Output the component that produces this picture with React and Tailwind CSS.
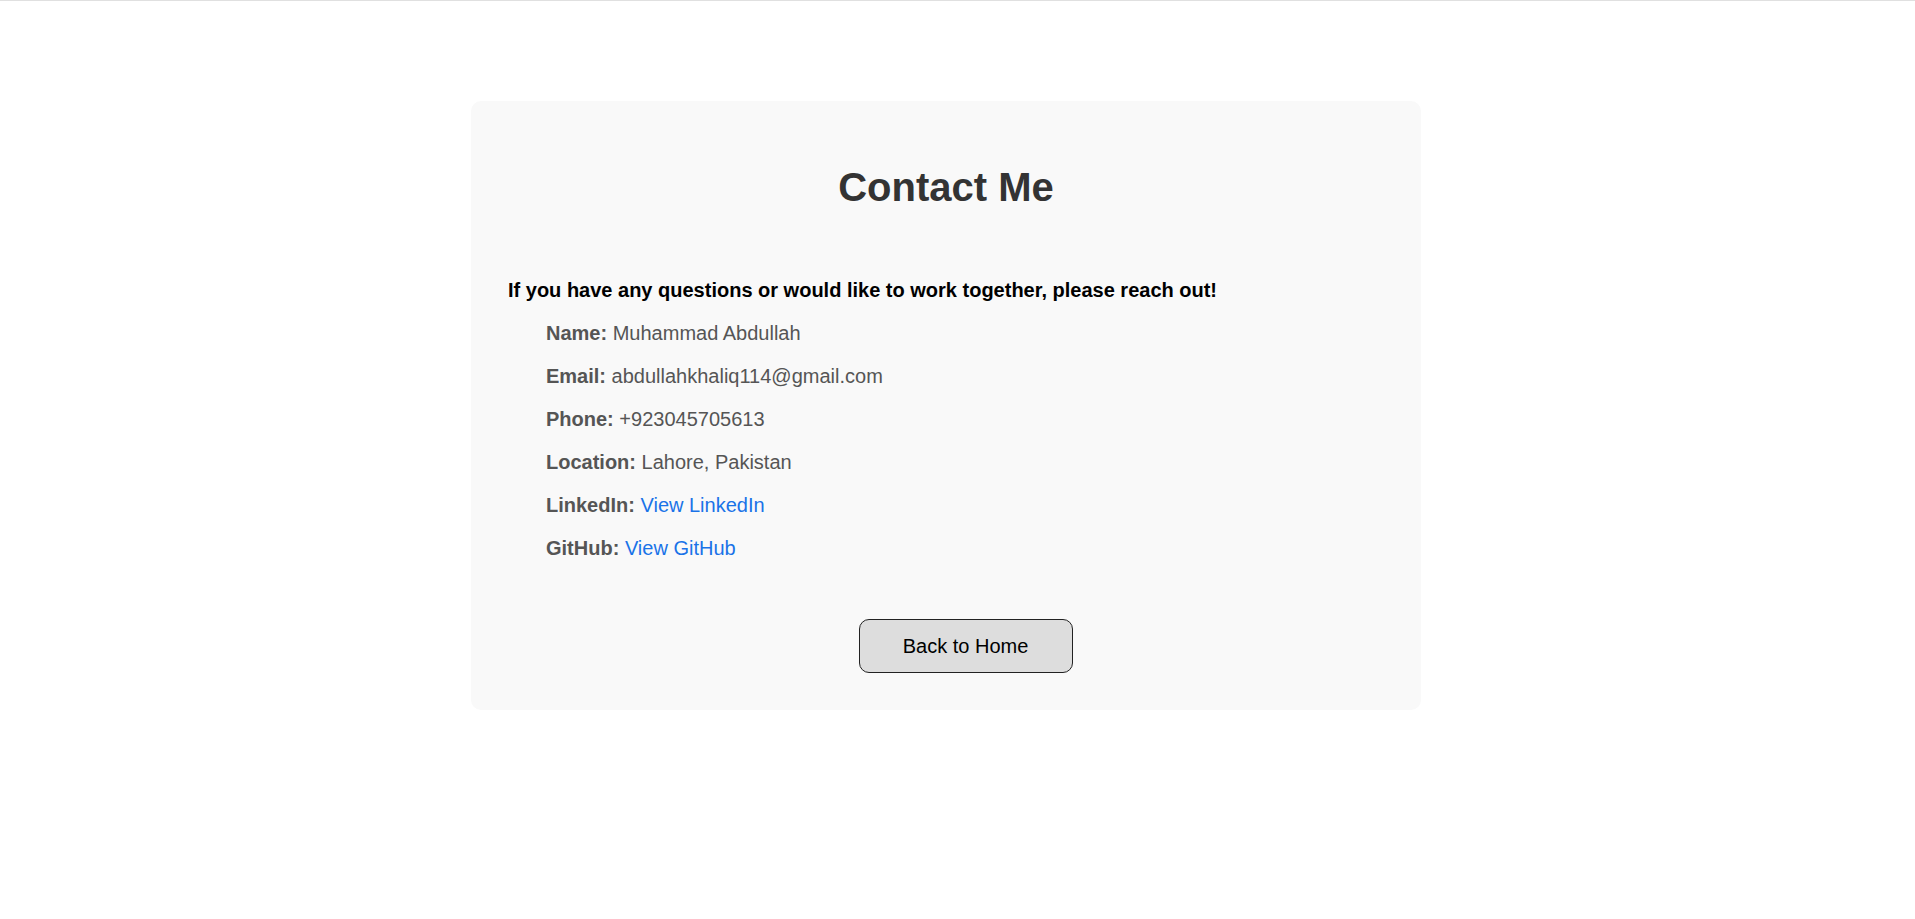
export default function App() {
  const items = [
    { label: "Name:", value: "Muhammad Abdullah" },
    { label: "Email:", value: "abdullahkhaliq114@gmail.com" },
    { label: "Phone:", value: "+923045705613" },
    { label: "Location:", value: "Lahore, Pakistan" },
    { label: "LinkedIn:", link: "View LinkedIn" },
    { label: "GitHub:", link: "View GitHub" },
  ];

  return (
    <div className="min-h-screen bg-white border-t border-[#e0e0e0] font-['Liberation_Sans',Arial,sans-serif]">
      <div className="pt-[100px] pr-[23px] flex justify-center">
        <div className="w-[950px] bg-[#f9f9f9] rounded-[10px] px-[37px] pt-[63px] pb-[37px]">
          <h1 className="text-center text-[40px] leading-[46px] font-bold text-[#333]">
            Contact Me
          </h1>

          <p className="mt-[69px] text-[20px] leading-[23px] font-bold text-black">
            If you have any questions or would like to work together, please
            reach out!
          </p>

          <ul className="mt-[20px] pl-[38px] flex flex-col gap-[20px] text-[20px] leading-[23px] text-[#555]">
            {items.map((it) => (
              <li key={it.label}>
                <strong className="font-bold">{it.label}</strong>{" "}
                {it.link ? (
                  <a href="#" className="text-[#1a73e8]">
                    {it.link}
                  </a>
                ) : (
                  it.value
                )}
              </li>
            ))}
          </ul>

          <div className="mt-[59px] flex justify-center">
            <button className="ml-[39px] w-[214px] h-[54px] border border-[#222] rounded-[10px] bg-[#dddddd] text-[20px] text-black">
              Back to Home
            </button>
          </div>
        </div>
      </div>
    </div>
  );
}
